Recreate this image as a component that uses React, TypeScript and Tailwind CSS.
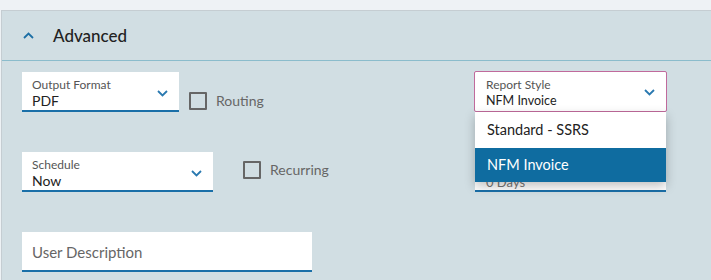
const font = { fontFamily: "Lato, 'Open Sans', sans-serif" };

function Chevron({ up = false, className = "" }: { up?: boolean; className?: string }) {
	return (
		<svg width="11" height="7" viewBox="0 0 11 7" className={className} fill="none">
			<path
				d={up ? "M1 6 L5.5 1.5 L10 6" : "M1 1 L5.5 5.5 L10 1"}
				stroke="currentColor"
				strokeWidth="1.8"
			/>
		</svg>
	);
}

function SelectField({ label, value, width }: { label: string; value: string; width: string }) {
	return (
		<div className={`relative shrink-0 h-[40px] bg-white border-b-2 border-[#1a6fa8] pl-[10px] pt-[5px] ${width}`}>
			<div className="text-[12px] leading-[15px] text-[#555]">{label}</div>
			<div className="text-[14px] leading-[17px] text-[#222]">{value}</div>
			<Chevron className="absolute right-[11px] top-[18px] text-[#2a79b0]" />
		</div>
	);
}

function Checkbox({ label }: { label: string }) {
	return (
		<div className="flex items-center gap-[9px]">
			<div className="w-[18px] h-[18px] border-2 border-[#666] rounded-[1px]" />
			<span className="text-[14px] text-[#666]">{label}</span>
		</div>
	);
}

export default function App() {
	return (
		<div style={font} className="w-[711px] h-[280px] bg-[#eef2f5] pt-[10px] overflow-hidden">
			<div className="ml-[1px] h-[270px] border-t border-l border-[#c5cdd2] bg-[#d1dee3]">
				<div className="h-[50px] flex items-center border-b border-[#8bbccc] pl-[21px]">
					<Chevron up className="text-[#1d6fa5]" />
					<span className="ml-[19px] text-[17px] font-medium text-[#222]">Advanced</span>
				</div>

				<div className="relative pt-[11px] pl-[20px]">
					<div className="grid grid-cols-[452px_193px] h-[40px]">
						<div className="flex">
							<SelectField label="Output Format" value="PDF" width="w-[157px]" />
							<div className="ml-[10px] mt-[18px]">
								<Checkbox label="Routing" />
							</div>
						</div>
						<div className="relative -mt-[1px] w-[193px] h-[41px] bg-white border border-[#c06a9c] rounded-[2px] pl-[11px] pt-[5px]">
							<div className="text-[12px] leading-[16px] text-[#555]">Report Style</div>
							<div className="text-[12.5px] leading-[16px] text-[#222]">NFM Invoice</div>
							<Chevron className="absolute right-[11px] top-[17px] text-[#2a79b0]" />
						</div>
					</div>

					<div className="grid grid-cols-[453px_191px] mt-[40px] h-[40px]">
						<div className="flex">
							<SelectField label="Schedule" value="Now" width="w-[191px]" />
							<div className="ml-[30px] mt-[7px]">
								<Checkbox label="Recurring" />
							</div>
						</div>
						<div className="w-[191px] h-[40px] bg-white border-b-2 border-[#1a6fa8] pl-[11px] pt-[21px] text-[13px] text-[#777]">
							0 Days
						</div>
					</div>

					<div className="mt-[40px] w-[290px] h-[40px] bg-white border-b-2 border-[#1a6fa8] pl-[10px] flex items-center pt-[3px] text-[15px] text-[#666]">
						User Description
					</div>

					<div className="absolute left-[473px] top-[51px] w-[191px] bg-white shadow-[0_4px_10px_rgba(0,0,0,0.25)]">
						<div className="h-[36px] flex items-center pl-[12px] text-[14.5px] text-[#222]">Standard - SSRS</div>
						<div className="h-[34px] flex items-center pl-[12px] text-[14.5px] text-white bg-[#0f6ca0]">NFM Invoice</div>
					</div>
				</div>
			</div>
		</div>
	);
}
